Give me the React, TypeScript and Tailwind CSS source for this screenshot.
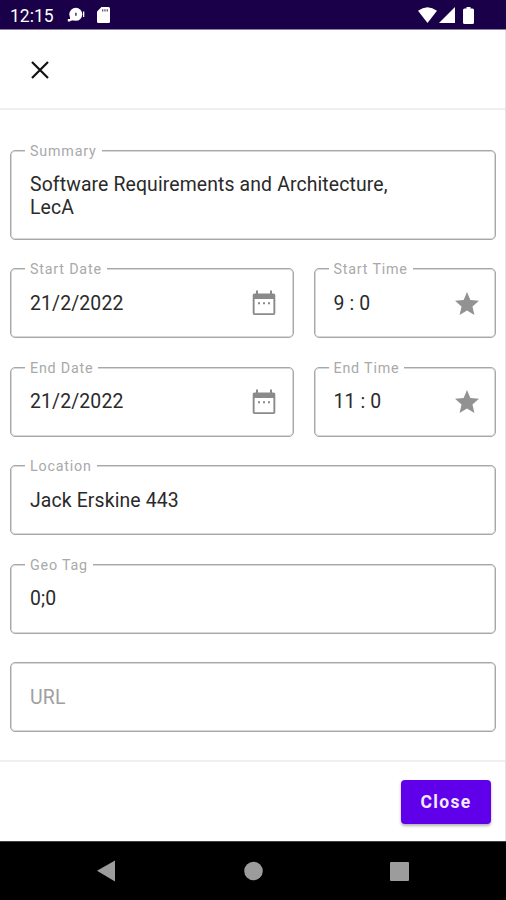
import type { ReactNode } from "react";
import clsx from "clsx";

type FieldProps = {
  label: string;
  value?: string;
  icon?: ReactNode;
  className?: string;
};

function CalendarIcon() {
  return (
    <svg viewBox="0 0 24 26" className="h-[26px] w-6 shrink-0" fill="#8a8a8a">
      <path
        fillRule="evenodd"
        d="M4 0.500h2v3h12v-3h2v3h1.500a1.800 1.800 0 0 1 1.800 1.800v18a1.800 1.800 0 0 1-1.800 1.800h-19a1.800 1.800 0 0 1-1.800-1.800v-18a1.800 1.800 0 0 1 1.800-1.800H4zM2.600 9v14.200h18.800V9z"
      />
      <path d="M6 12.300h2v2H6zM11 12.300h2v2h-2zM16 12.300h2v2h-2z" />
    </svg>
  );
}

function StarIcon() {
  return (
    <svg viewBox="2 2 20 19" className="-mr-px h-[23px] w-6 shrink-0" fill="#929292">
      <path d="M12 17.270 18.180 21l-1.640-7.030L22 9.240l-7.190-.61L12 2 9.190 8.630 2 9.240l5.460 4.730L5.820 21z" />
    </svg>
  );
}

function Field({ label, value, icon, className }: FieldProps) {
  return (
    <div
      className={clsx(
        "relative flex items-center justify-between rounded-[5px] border border-[#a8a8a8] pr-[17px] pl-[19px] shadow-[inset_0_0_0_1px_#d8d8d8]",
        className
      )}
    >
      {value && (
        <span className="absolute -top-[9px] left-[14px] bg-white px-[5px] text-[14.300px] leading-[18px] tracking-[0.800px] text-[#a9a9a9]">
          {label}
        </span>
      )}
      <p
        className={clsx(
          "leading-[23px] whitespace-pre-line",
          value ? "text-[19.400px] tracking-[0.130px] text-[#2a2a2a]" : "text-[19.500px] tracking-[0.200px] text-[#a0a0a0]"
        )}
      >
        {value ?? label}
      </p>
      {icon}
    </div>
  );
}

function StatusBar() {
  return (
    <div className="flex h-[30px] items-center border-b border-[#8b819f] bg-[#190049] pr-8 pl-[10px] text-white">
      <span className="w-[57px] pt-[3px] text-[17.500px] leading-5">12:15</span>
      <svg viewBox="0 0 18 16" className="mt-px h-4 w-[18px]" fill="white">
        <circle cx="8.800" cy="7.300" r="6.500" />
        <path d="M3 9l4 4-4 1zM16 4.500h1.300v5.500H16zM0.800 12h2.400v2.400H0.800z" />
        <path d="M8.300 5.800h1.200v3H8.300z" fill="#190049" />
      </svg>
      <svg viewBox="0 0 13 16" className="mt-px ml-3 h-4 w-[13px]">
        <path d="M4.500 0H11.500Q13 0 13 1.500V14.500Q13 16 11.500 16H1.500Q0 16 0 14.500V4.500z" fill="white" />
        <path d="M5 2.200h1.300v2.300H5zM7.300 2.200h1.300v2.300H7.300zM9.600 2.200h1.300v2.300H9.600z" fill="#604f86" />
      </svg>
      <div className="mt-px ml-auto flex items-center gap-[2px]">
        <svg viewBox="0 0 19 16" className="h-4 w-[19px]" fill="white">
          <path d="M0 3.800Q9.500-3.400 19 3.800L9.500 16z" />
        </svg>
        <svg viewBox="0 0 16 16" className="h-4 w-4" fill="white">
          <path d="M16 0v16H0z" />
        </svg>
        <svg viewBox="0 0 11 17" className="ml-[6px] h-[17px] w-[11px]" fill="white">
          <path d="M3.500 0h4v1.500H9.500Q11 1.500 11 3v12.500Q11 17 9.500 17h-8Q0 17 0 15.500V3q0-1.500 1.500-1.500h2z" />
        </svg>
      </div>
    </div>
  );
}

function NavBar() {
  return (
    <div className="h-[59px] border-t border-[#3e4444] bg-black">
      <svg viewBox="0 0 506 58" className="h-[58px] w-full" fill="#9c9c9c">
        <path d="M97 28.800 115 18.500v21z" />
        <circle cx="253.500" cy="29" r="9.300" />
        <rect x="390" y="20" width="19" height="19" rx="1" />
      </svg>
    </div>
  );
}

export default function App() {
  return (
    <div className="flex h-[900px] w-[506px] flex-col overflow-hidden bg-white font-['Roboto',sans-serif]">
      <StatusBar />
      <div className="flex flex-1 flex-col border-r border-[#e4e4e4]">
        <header className="flex h-20 items-center border-b-2 border-[#efefef] pl-[31px]">
          <svg viewBox="0 0 18 18" className="mt-px h-[18px] w-[18px]" stroke="#111" strokeWidth="2.200">
            <path d="M1 1l16 16M17 1L1 17" />
          </svg>
        </header>
        <main className="flex h-[652px] flex-col gap-[28.500px] border-b-2 border-[#efefef] pt-10 pr-[9px] pl-[10px]">
          <Field
            label="Summary"
            value={"Software Requirements and Architecture,\nLecA"}
            className="h-[89.500px] pt-[2px]"
          />
          <div className="flex gap-[19.500px]">
            <Field label="Start Date" value="21/2/2022" icon={<CalendarIcon />} className="h-[70px] w-[284px]" />
            <Field label="Start Time" value="9 : 0" icon={<StarIcon />} className="h-[70px] flex-1" />
          </div>
          <div className="flex gap-[19.500px]">
            <Field label="End Date" value="21/2/2022" icon={<CalendarIcon />} className="h-[70px] w-[284px]" />
            <Field label="End Time" value="11 : 0" icon={<StarIcon />} className="h-[70px] flex-1" />
          </div>
          <Field label="Location" value="Jack Erskine 443" className="h-[70px]" />
          <Field label="Geo Tag" value="0;0" className="h-[70px]" />
          <Field label="URL" className="h-[70px]" />
        </main>
        <footer className="flex flex-1 items-center justify-end pr-[14px]">
          <button className="h-11 w-[90px] rounded-[4px] bg-[#6000ea] pt-[2px] text-[17.500px] font-bold tracking-[1.300px] text-[#f3eaff] shadow-[0_2px_3px_rgba(0,0,0,0.3)]">
            Close
          </button>
        </footer>
      </div>
      <NavBar />
    </div>
  );
}
